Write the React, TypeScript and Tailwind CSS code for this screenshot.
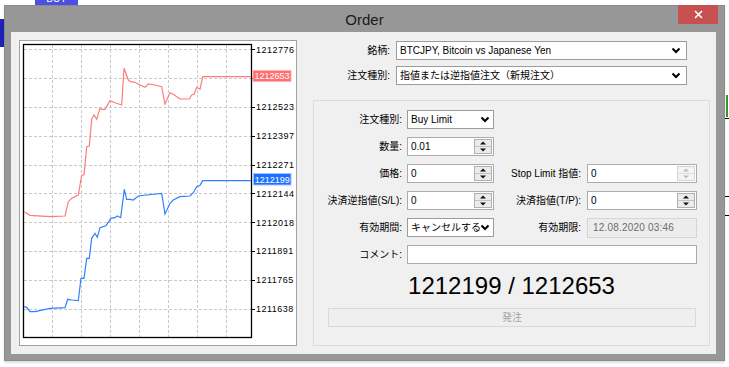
import React from "react";

const F = "font-['Liberation_Sans','Noto_Sans_CJK_JP',sans-serif]";

function Chevron() {
  return (
    <svg width="10" height="7" viewBox="0 0 10 7">
      <polyline points="1.5,1.5 5,5 8.5,1.5" fill="none" stroke="#000" strokeWidth="2" />
    </svg>
  );
}

function Tri({ up, color }: { up?: boolean; color: string }) {
  return (
    <svg width="6" height="4" viewBox="0 0 6 4">
      {up ? <polygon points="0,3.5 3,0.5 6,3.5" fill={color} /> : <polygon points="0,0.5 3,3.5 6,0.5" fill={color} />}
    </svg>
  );
}

function Spinner({ disabled }: { disabled?: boolean }) {
  const c = disabled ? "#bdbdbd" : "#111";
  return (
    <div className={"w-[18px] h-[15px] mr-[1px] flex flex-col border " + (disabled ? "border-[#d4d4d4] bg-[#f4f4f4]" : "border-[#b0b0b0] bg-[#ebebeb]")}>
      <div className={"flex-1 flex items-center justify-center border-b " + (disabled ? "border-[#dedede]" : "border-[#c4c4c4]")}>
        <Tri up color={c} />
      </div>
      <div className="flex-1 flex items-center justify-center">
        <Tri color={c} />
      </div>
    </div>
  );
}

function Label({ children, className }: { children: React.ReactNode; className: string }) {
  return <div className={"text-right text-[10px] text-black leading-none whitespace-nowrap " + className}>{children}</div>;
}

const grids = [49.3, 78.1, 106.9, 135.7, 164.5, 193.3, 222.1, 250.9, 279.7, 308.5];
const labels: [number, string][] = [
  [49.3, "1212776"],
  [106.9, "1212523"],
  [135.7, "1212397"],
  [164.5, "1212271"],
  [193.3, "1212144"],
  [222.1, "1212018"],
  [250.9, "1211891"],
  [279.7, "1211765"],
  [308.5, "1211638"],
];
const vx = [52, 81, 110, 139, 168, 197, 226];

const red =
  "24,211.7 28,214 30,215.3 50,216.7 65,216 68.3,201.7 71.7,198.3 78.3,195 81.7,175 84,175 86.7,146.7 89.3,146 91.7,119.3 94,115 96.7,119.3 100,108.3 101.7,109.3 105,109.3 110,100.7 115,102.7 121.7,105 124,68.3 128.3,80 130.7,81.7 135,82.3 140,85 145,87.3 148.3,84 155,85 161.7,86.7 165,104 170,92.7 173.3,94.3 180,99 189.3,99 191.7,95 194,94.3 196.7,87.3 200,89.3 202.7,76.7 251,76.7";
const blue =
  "24,306.7 26.7,307.3 30,311.7 35,311.7 50,308.3 65,307.7 67.7,299.3 71.7,300 78.3,300.7 81,278.3 84,278.3 86.7,258.3 89.3,258.3 91.7,238.3 95,233.3 97.3,237.3 100,227.7 106,225.7 111,218.3 115,217.7 117.3,216 120.7,217.7 124.3,189.3 126.7,199.3 130,199.3 133.3,200 138.3,196 146.7,195 161.7,193.3 165,214 170,203.3 173.3,200 180,196.7 190,196 193.3,192.7 196.7,186.7 200,185.3 202.7,180.7 251,180.7";

function Chart() {
  return (
    <div className="w-[278px] h-[306px] border border-[#a3a3a3] bg-white shrink-0">
      <svg width="276" height="304" viewBox="20 41 276 304" className="block">
        {vx.map((x) => (
          <line key={x} x1={x + 0.5} y1={45} x2={x + 0.5} y2={337} stroke="#c9c9c9" strokeDasharray="3 2" />
        ))}
        {grids.map((y) => (
          <line key={y} x1={24} y1={Math.round(y) + 0.5} x2={251} y2={Math.round(y) + 0.5} stroke="#c9c9c9" strokeDasharray="3 2" />
        ))}
        <rect x={23.5} y={44.5} width={228} height={293} fill="none" stroke="#000" strokeWidth="1.3" />
        {grids.map((y) => (
          <line key={"t" + y} x1={251} y1={Math.round(y) + 0.5} x2={255} y2={Math.round(y) + 0.5} stroke="#000" />
        ))}
        {labels.map(([y, t]) => (
          <text key={t} x={256} y={y + 3.5} fontSize="9" letterSpacing="0.5" fill="#000" fontFamily="Liberation Sans, sans-serif">
            {t}
          </text>
        ))}
        <polyline points={red} fill="none" stroke="#ff7b7b" strokeWidth="1.2" />
        <polyline points={blue} fill="none" stroke="#2f80ff" strokeWidth="1.2" />
        <rect x={253} y={70.5} width={38} height={11} fill="#ff6f6f" stroke="#ffb0b0" />
        <text x={272} y={79.3} fontSize="9" textAnchor="middle" fill="#fff" fontFamily="Liberation Sans, sans-serif">
          1212653
        </text>
        <rect x={253.5} y={173.5} width={37.5} height={11.5} fill="#1f6fff" stroke="#9cc2ff" />
        <text x={272.2} y={182.5} fontSize="9" textAnchor="middle" fill="#fff" fontFamily="Liberation Sans, sans-serif">
          1212199
        </text>
      </svg>
    </div>
  );
}

function SpinInput({ value, disabled, className }: { value: string; disabled?: boolean; className: string }) {
  return (
    <div className={"h-[19px] border border-[#acacac] bg-white flex items-center " + className}>
      <span className="flex-1 pl-[3px] text-[10px] leading-none">{value}</span>
      <Spinner disabled={disabled} />
    </div>
  );
}

export default function App() {
  return (
    <div className={"relative w-[729px] h-[367px] bg-white overflow-hidden " + F}>
      {/* background chart remnants */}
      <div className="absolute left-[35px] top-[-9px] w-[43px] h-[14px] bg-[#4a50e4] text-white text-[10px] flex items-center justify-center">BUY</div>
      <div className="absolute left-0 top-[19px] w-[4px] h-[28px] bg-[#1e22b8]" />
      <div className="absolute left-[726px] top-[95px] w-[2px] h-[22px] bg-[#2e9a2e]" />
      <div className="absolute left-[725px] top-[118px] w-[4px] h-[1px] bg-black" />
      <div className="absolute left-[725px] top-[196px] w-[4px] h-[1px] bg-black" />
      <div className="absolute left-[725px] top-[215px] w-[4px] h-[1px] bg-black" />

      {/* window */}
      <div className="relative ml-[4px] mt-[5px] w-[721px] h-[356px] bg-[#979797] border border-[#8a8a8a] flex flex-col shadow-[0_2px_2px_rgba(0,0,0,0.12)]">
        {/* title bar */}
        <div className="h-[26px] grid grid-cols-[1fr_auto_1fr] items-start">
          <div />
          <div className="text-[15px] text-[#1a1a1a] leading-none pt-[6px]">Order</div>
          <div className="flex justify-end pr-[6px]">
            <div className="w-[40px] h-[19px] bg-[#c75050] flex items-center justify-center -mt-[1px]">
              <svg width="9" height="9" viewBox="0 0 9 9">
                <path d="M1 1 L8 8 M8 1 L1 8" stroke="#fff" strokeWidth="1.6" />
              </svg>
            </div>
          </div>
        </div>
        {/* content */}
        <div className="ml-[6px] mr-[8px] h-[322px] bg-[#f0f0f0] flex pl-[8px] pt-[8px] gap-[16px]">
          <Chart />
          <div className="w-[397px] flex flex-col">
            <div className="flex items-center h-[19px] mt-[1px]">
              <Label className="w-[77px]">銘柄:</Label>
              <div className="ml-[6px] w-[291px] h-[19px] border border-[#9c9c9c] bg-white flex items-center justify-between pl-[3px] pr-[5px]">
                <span className="text-[10px] leading-none">BTCJPY, Bitcoin vs Japanese Yen</span>
                <Chevron />
              </div>
            </div>
            <div className="flex items-center h-[19px] mt-[6px]">
              <Label className="w-[77px]">注文種別:</Label>
              <div className="ml-[6px] w-[291px] h-[19px] border border-[#9c9c9c] bg-white flex items-center justify-between pl-[3px] pr-[5px]">
                <span className="text-[10px] leading-none">指値または逆指値注文（新規注文）</span>
                <Chevron />
              </div>
            </div>
            {/* group box */}
            <div className="mt-[15px] h-[246px] border border-[#dcdcdc] flex flex-col pt-[9px]">
              <div className="flex flex-col gap-[8px]">
                <div className="flex items-center h-[19px]">
                  <Label className="w-[88px]">注文種別:</Label>
                  <div className="ml-[5px] w-[87px] h-[19px] border border-[#9c9c9c] bg-white flex items-center justify-between pl-[3px] pr-[3px]">
                    <span className="text-[10px] leading-none">Buy Limit</span>
                    <Chevron />
                  </div>
                </div>
                <div className="flex items-center h-[19px]">
                  <Label className="w-[88px]">数量:</Label>
                  <SpinInput value="0.01" className="ml-[5px] w-[87px]" />
                </div>
                <div className="flex items-center h-[19px]">
                  <Label className="w-[88px]">価格:</Label>
                  <SpinInput value="0" className="ml-[5px] w-[87px]" />
                  <Label className="w-[87px]">Stop Limit 指値:</Label>
                  <SpinInput value="0" disabled className="ml-[6px] w-[110px]" />
                </div>
                <div className="flex items-center h-[19px]">
                  <Label className="w-[88px]">決済逆指値(S/L):</Label>
                  <SpinInput value="0" className="ml-[5px] w-[87px]" />
                  <Label className="w-[87px]">決済指値(T/P):</Label>
                  <SpinInput value="0" className="ml-[6px] w-[110px]" />
                </div>
                <div className="flex items-center h-[19px]">
                  <Label className="w-[88px]">有効期間:</Label>
                  <div className="ml-[5px] w-[87px] h-[19px] border border-[#9c9c9c] bg-white flex items-center pl-[3px] pr-[3px] overflow-hidden">
                    <span className="flex-1 overflow-hidden whitespace-nowrap text-[10px] leading-none">キャンセルするまで</span>
                    <Chevron />
                  </div>
                  <Label className="w-[87px]">有効期限:</Label>
                  <div className="ml-[6px] w-[110px] h-[20px] border border-[#d6d6d6] bg-[#ececec] flex items-center pl-[5px]">
                    <span className="text-[10px] leading-none text-[#6d6d6d] tracking-[0.2px]">12.08.2020 03:46</span>
                  </div>
                </div>
                <div className="flex items-center h-[19px]">
                  <Label className="w-[88px]">コメント:</Label>
                  <div className="ml-[5px] w-[290px] h-[19px] border border-[#acacac] bg-white" />
                </div>
              </div>
              <div className="h-[44px] flex items-center justify-center">
                <span className="text-[24px] leading-none text-black font-['Liberation_Sans',sans-serif]">1212199 / 1212653</span>
              </div>
              <div className="ml-[14px] w-[368px] h-[19px] border border-[#d9d9d9] bg-[#efefef] flex items-center justify-center">
                <span className="text-[10px] leading-none text-[#a3a3a3]">発注</span>
              </div>
            </div>
          </div>
        </div>
      </div>
    </div>
  );
}
